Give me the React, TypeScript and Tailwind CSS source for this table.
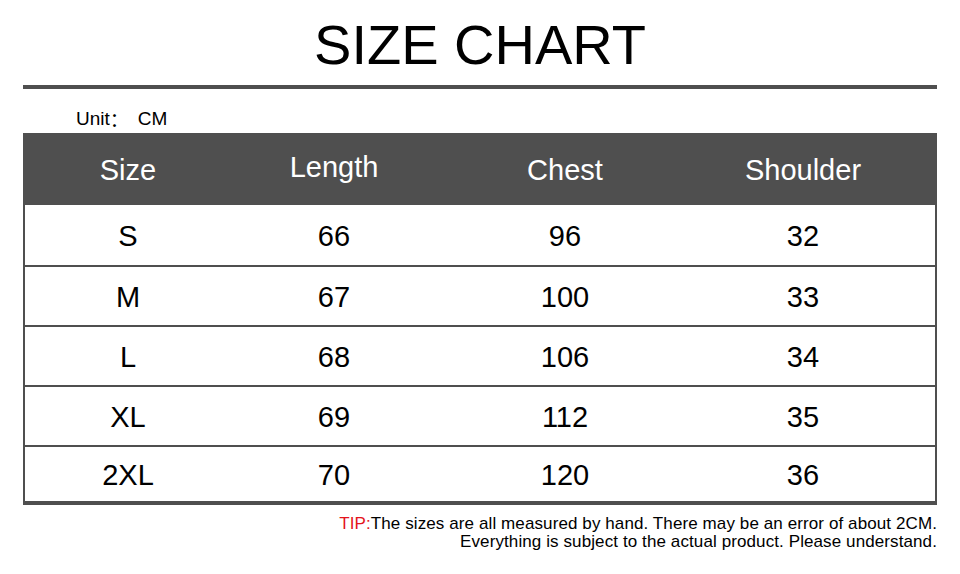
import React from "react";

const rows = [
  ["S", "66", "96", "32"],
  ["M", "67", "100", "33"],
  ["L", "68", "106", "34"],
  ["XL", "69", "112", "35"],
  ["2XL", "70", "120", "36"],
];

const cols = "grid grid-cols-[210px_202px_260px_216px_1fr]";

const App: React.FC = () => {
  return (
    <div className="w-[960px] h-[574px] bg-white px-[23px] text-black font-['Liberation_Sans',Arial,sans-serif]">
      <h1 className="pt-[17px] h-[73px] text-center text-[56px] leading-[56px] font-normal">
        SIZE CHART
      </h1>
      <div className="mt-[12px] h-[4px] bg-[#4f4f4f]"></div>

      <p className="mt-[20px] h-[20px] pl-[53px] flex items-center text-[19px] leading-[20px]">
        Unit<span className="font-['Noto_Sans_CJK_SC',sans-serif] leading-[20px]">：</span>
        <span className="ml-[9px]">CM</span>
      </p>

      <div className="mt-[4px]">
        <div className={`${cols} h-[72px] pt-[3px] bg-[#4f4f4f] text-white text-[29px] items-center`}>
          <div className="text-center">Size</div>
          <div className="text-center -mt-[6px]">Length</div>
          <div className="text-center">Chest</div>
          <div className="text-center">Shoulder</div>
          <div></div>
        </div>
        <div className="border-x-2 border-b-4 border-[#4f4f4f]">
          {rows.map((r, i) => (
            <div
              key={r[0]}
              className={`${cols} -ml-[2px] pt-[3px] ${
                i === rows.length - 1 ? "h-[56px]" : "h-[60px]"
              } items-center text-[29px] ${i > 0 ? "border-t-2 border-[#4f4f4f]" : ""}`}
            >
              <div className="text-center">{r[0]}</div>
              <div className="text-center">{r[1]}</div>
              <div className="text-center">{r[2]}</div>
              <div className="text-center">{r[3]}</div>
              <div></div>
            </div>
          ))}
        </div>
      </div>

      <div className="mt-[10px] text-right text-[17px] leading-[18px] tracking-[0.1px]">
        <p>
          <span className="text-[#e4141b]">TIP:</span>The sizes are all measured by hand. There may be an error of about 2CM.
        </p>
        <p>Everything is subject to the actual product. Please understand.</p>
      </div>
    </div>
  );
};

export default App;
